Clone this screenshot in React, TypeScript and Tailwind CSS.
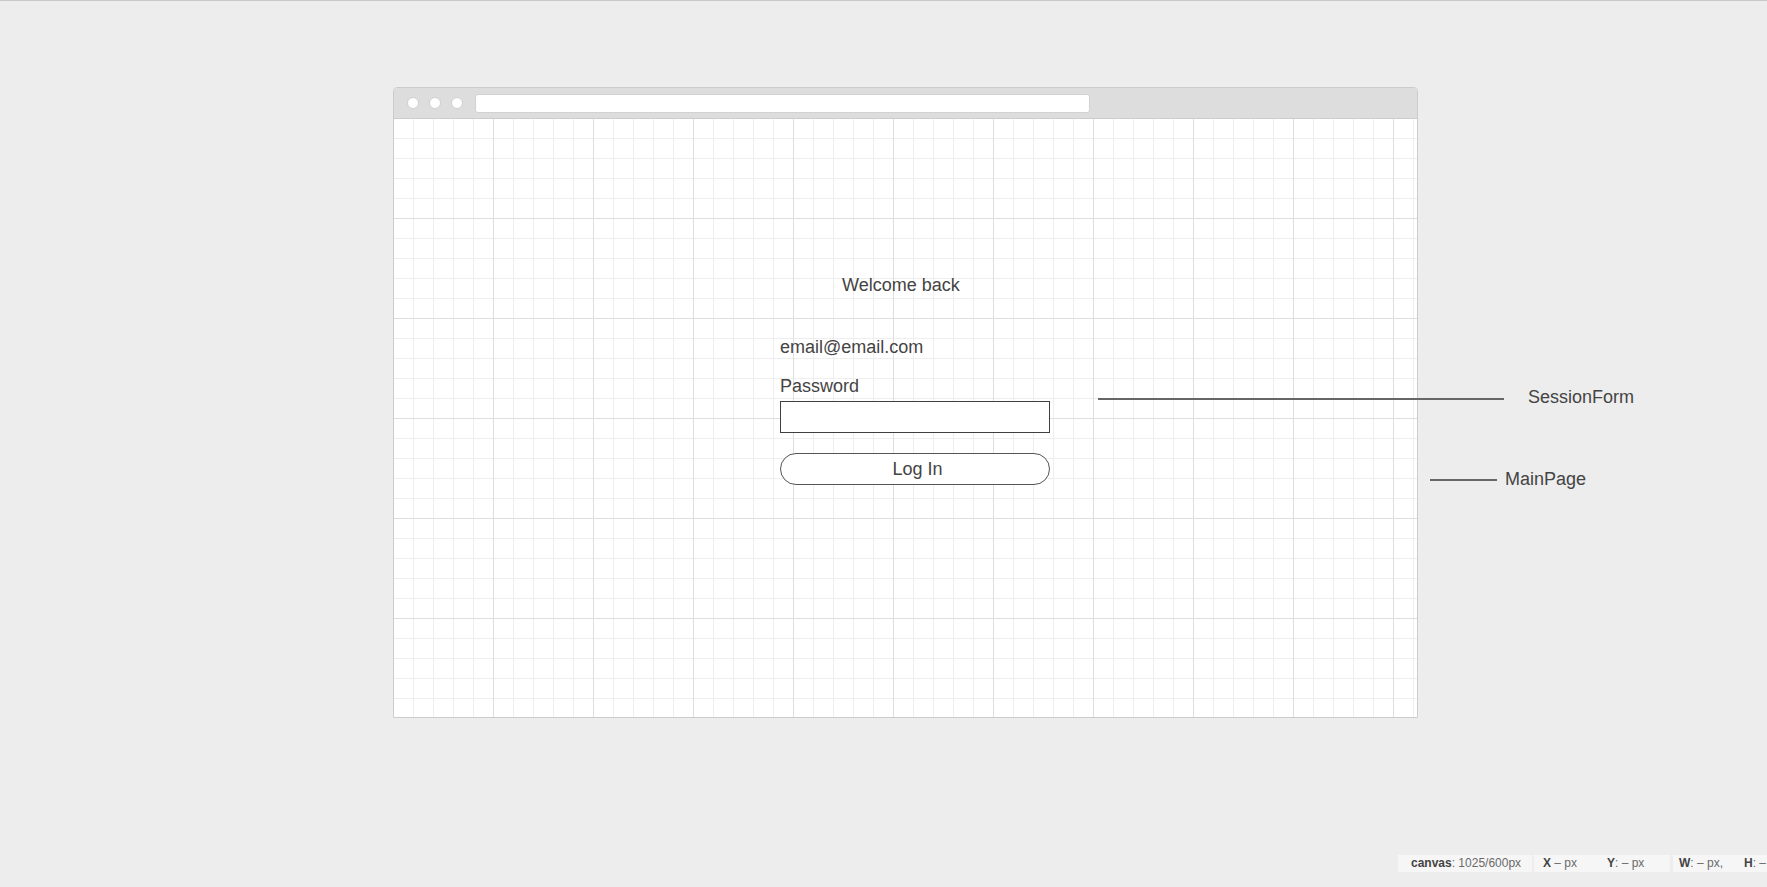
import React from 'react';

const gridBg =
  "bg-white bg-[linear-gradient(to_right,#dedede_1px,transparent_1px),linear-gradient(to_bottom,#dedede_1px,transparent_1px),linear-gradient(to_right,#eeeeee_1px,transparent_1px),linear-gradient(to_bottom,#eeeeee_1px,transparent_1px)] bg-size-[100px_100px,100px_100px,20px_20px,20px_20px] bg-position-[-1px_-1px]";

const TitleBar: React.FC = () => (
  <div className="h-[31px] bg-[#dddddd] border-b border-[#cccccc] flex items-center pl-[13px] rounded-t-[3px]">
    <div className="flex gap-[10px]">
      <span className="w-[12px] h-[12px] rounded-full bg-white border border-[#cfcfcf]" />
      <span className="w-[12px] h-[12px] rounded-full bg-white border border-[#cfcfcf]" />
      <span className="w-[12px] h-[12px] rounded-full bg-white border border-[#cfcfcf]" />
    </div>
    <div className="ml-[12px] mt-[1px] w-[615px] h-[19px] bg-white rounded-[3px] border border-[#d2d2d2]" />
  </div>
);

const SessionForm: React.FC = () => (
  <div className="ml-[386px] w-[270px] flex flex-col">
    <div className="mt-[41px] leading-[21px]">email@email.com</div>
    <div className="mt-[18px] leading-[21px]">Password</div>
    <input
      type="password"
      className="mt-[4px] h-[32px] w-full border border-[#3f3f3f] bg-white outline-none"
    />
    <button className="mt-[20px] h-[32px] w-full rounded-full border border-[#555555] bg-white leading-[21px] text-[#444444] pl-[5px]">
      Log In
    </button>
  </div>
);

const StatusBar: React.FC = () => (
  <div className="mt-auto mb-[15px] ml-[1398px] flex gap-[2px] text-[12px] leading-[17px] text-[#6a6a6a] whitespace-nowrap">
    <div className="shrink-0 w-[134px] h-[17px] bg-[#f6f6f6] pl-[13px]">
      <b className="text-[#444444]">canvas</b>: 1025/600px
    </div>
    <div className="shrink-0 w-[136px] h-[17px] bg-[#f6f6f6] pl-[9px] flex">
      <span className="w-[64px]">
        <b className="text-[#444444]">X</b> – px
      </span>
      <span>
        <b className="text-[#444444]">Y</b>: – px
      </span>
    </div>
    <div className="shrink-0 w-[120px] h-[17px] bg-[#f6f6f6] ml-[1px] pl-[6px] flex">
      <span className="w-[65px]">
        <b className="text-[#444444]">W</b>: – px,
      </span>
      <span>
        <b className="text-[#444444]">H</b>: –
      </span>
    </div>
  </div>
);

export default function App() {
  return (
    <div className="relative w-full h-[887px] overflow-hidden bg-[#ededed] border-t border-[#c8c8c8] flex flex-col font-['Liberation_Sans',Arial,sans-serif] text-[18px] text-[#444444]">
      <div className="ml-[393px] mt-[86px] w-[1025px] border border-[#cccccc] rounded-t-[4px] bg-white">
        <TitleBar />
        <div className={`h-[598px] ${gridBg} pt-[156px]`}>
          <div className="pl-[448px] leading-[21px]">Welcome back</div>
          <SessionForm />
        </div>
      </div>

      {/* annotations */}
      <div className="absolute left-[1098px] top-[386px] flex items-start">
        <div className="mt-[11px] w-[406px] h-[1.5px] bg-[#666666]" />
        <span className="ml-[24px] leading-[21px]">SessionForm</span>
      </div>
      <div className="absolute left-[1430px] top-[468px] flex items-start">
        <div className="mt-[10px] w-[67px] h-[1.5px] bg-[#666666]" />
        <span className="ml-[8px] leading-[21px]">MainPage</span>
      </div>

      <StatusBar />
    </div>
  );
}
